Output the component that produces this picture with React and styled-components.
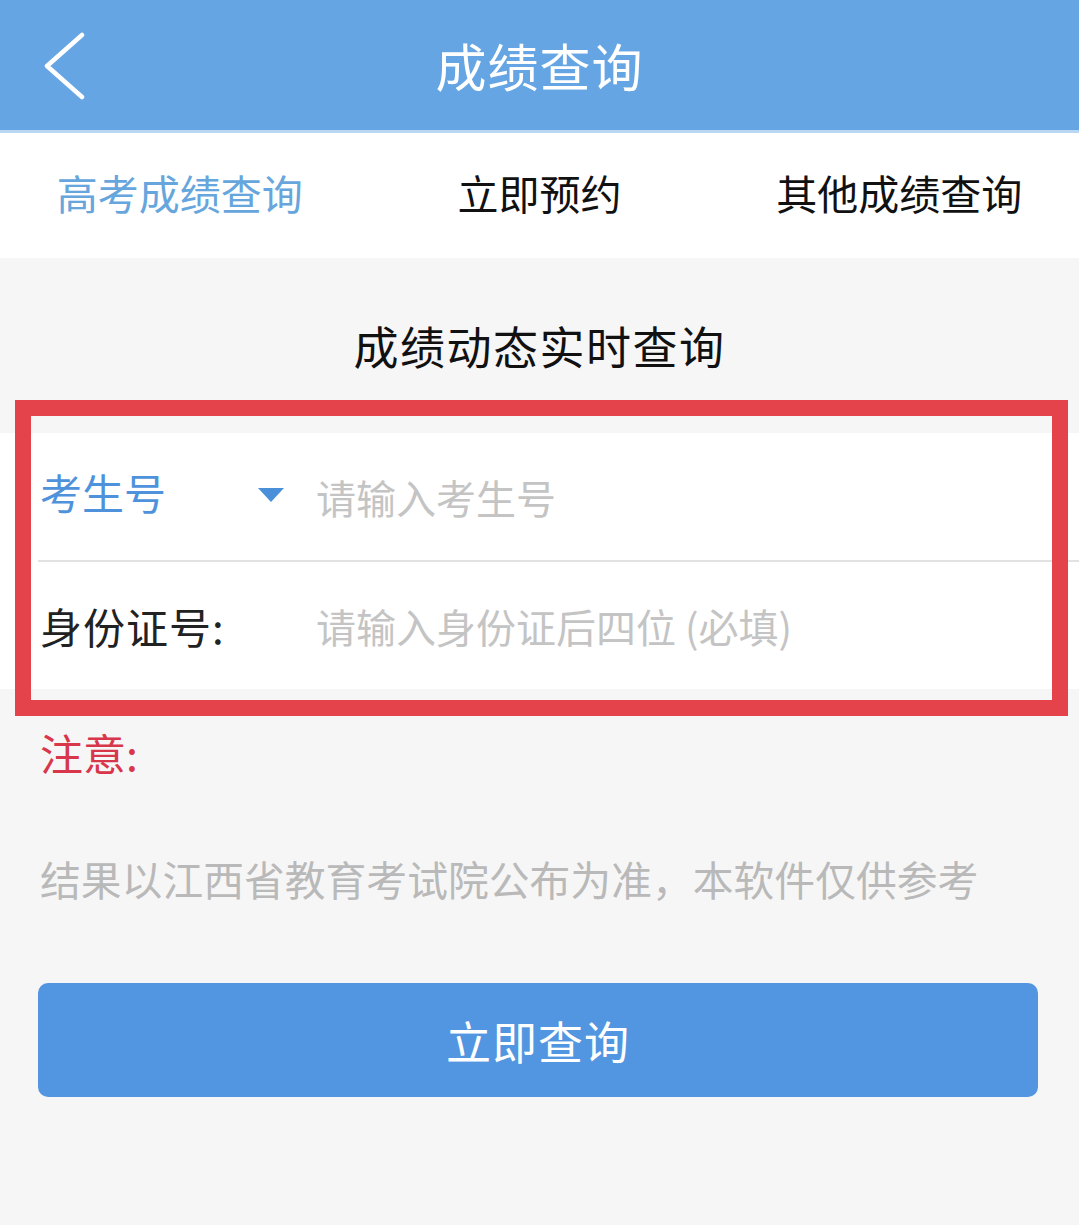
import styled, { createGlobalStyle } from 'styled-components';

const GlobalStyle = createGlobalStyle`
  body {
    margin: 0;
    background: #f6f6f6;
    font-family: "Noto Sans CJK SC", "Noto Sans", sans-serif;
  }
`;

const Page = styled.div`
  position: relative;
  width: 1079px;
  min-height: 1225px;
  background: #f6f6f6;
`;

const Header = styled.header`
  position: relative;
  height: 130px;
  background: #65a5e3;
  border-bottom: 3px solid #b9d6f3;
  display: flex;
  align-items: center;
  justify-content: center;
`;

const BackButton = styled.button`
  position: absolute;
  left: 38px;
  top: 30px;
  width: 52px;
  height: 72px;
  padding: 0;
  border: none;
  background: none;
  display: flex;
  align-items: center;
  justify-content: center;
`;

const HeaderTitle = styled.h1`
  margin: 0;
  color: #fff;
  font-size: 51px;
  font-weight: 400;
  letter-spacing: 1px;
`;

const Tabs = styled.nav`
  height: 125px;
  background: #fff;
  display: grid;
  grid-template-columns: repeat(3, 1fr);
  align-items: center;
`;

const Tab = styled.div`
  text-align: center;
  font-size: 41px;
  color: ${(p) => (p.$active ? '#66a6dd' : '#111')};
  margin-top: -8px;
`;

const SectionTitle = styled.h2`
  margin: 0;
  height: 175px;
  display: flex;
  align-items: center;
  justify-content: center;
  font-size: 45px;
  font-weight: 400;
  color: #111;
  letter-spacing: 1.5px;
`;

const Form = styled.div`
  background: #fff;
`;

const Row = styled.div`
  height: 127px;
  margin-left: 38px;
  display: flex;
  align-items: center;
  border-bottom: ${(p) => (p.$divider ? '2px solid #e2e2e2' : 'none')};
`;

const Label = styled.div`
  width: 244px;
  padding-left: 2px;
  display: flex;
  align-items: center;
  justify-content: space-between;
  font-size: 42px;
  color: ${(p) => (p.$accent ? '#4f92dc' : '#222')};
  margin-top: ${(p) => (p.$accent ? '-10px' : '0')};
  letter-spacing: ${(p) => (p.$accent ? '0' : '1px')};
`;

const Caret = styled.span`
  width: 0;
  height: 0;
  border-left: 13px solid transparent;
  border-right: 13px solid transparent;
  border-top: 14px solid #4a8fda;
  margin-top: 6px;
`;

const Field = styled.input`
  flex: 1;
  margin-left: 32px;
  border: none;
  outline: none;
  background: transparent;
  font-family: inherit;
  font-size: 40px;
  color: #333;
  padding: 0;

  &::placeholder {
    color: #c4c4c4;
  }
`;

const Highlight = styled.div`
  position: absolute;
  left: 15px;
  top: 400px;
  width: 1053px;
  height: 316px;
  box-sizing: border-box;
  border: 16px solid #e4434c;
  pointer-events: none;
`;

const NoticeHead = styled.div`
  margin: 32px 0 0 40px;
  font-size: 43px;
  color: #d8364b;
`;

const NoticeText = styled.p`
  margin: 66px 0 0 40px;
  font-size: 40.8px;
  color: #b9b9b9;
`;

const SubmitButton = styled.button`
  display: flex;
  align-items: center;
  justify-content: center;
  width: 1000px;
  height: 114px;
  margin: 75px 0 0 38px;
  border: none;
  border-radius: 10px;
  background: #5295e0;
  color: #fff;
  font-family: inherit;
  font-size: 45px;
  letter-spacing: 1px;
`;

export default function App() {
  return (
    <Page>
      <GlobalStyle />
      <Header>
        <BackButton aria-label="返回">
          <svg width="44" height="68" viewBox="0 0 44 68">
            <polyline
              points="40,3 5,34 40,65"
              fill="none"
              stroke="#fff"
              strokeWidth="4.5"
              strokeLinecap="round"
              strokeLinejoin="round"
            />
          </svg>
        </BackButton>
        <HeaderTitle>成绩查询</HeaderTitle>
      </Header>
      <Tabs>
        <Tab $active>高考成绩查询</Tab>
        <Tab>立即预约</Tab>
        <Tab>其他成绩查询</Tab>
      </Tabs>
      <SectionTitle>成绩动态实时查询</SectionTitle>
      <Form>
        <Row $divider>
          <Label $accent>
            考生号
            <Caret />
          </Label>
          <Field placeholder="请输入考生号" />
        </Row>
        <Row>
          <Label>身份证号:</Label>
          <Field placeholder="请输入身份证后四位 (必填)" />
        </Row>
      </Form>
      <NoticeHead>注意:</NoticeHead>
      <NoticeText>结果以江西省教育考试院公布为准，本软件仅供参考</NoticeText>
      <SubmitButton>立即查询</SubmitButton>
      <Highlight />
    </Page>
  );
}
